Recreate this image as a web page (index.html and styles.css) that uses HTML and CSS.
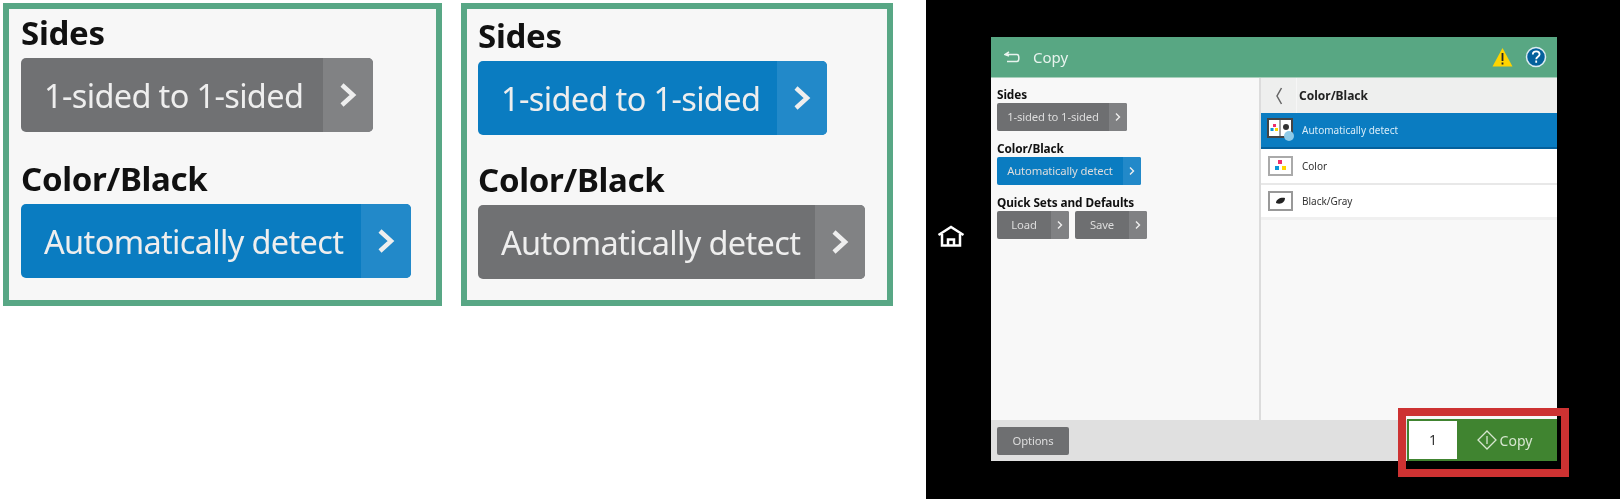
FILE: index.html
```html
<!DOCTYPE html>
<html>
<head>
    <title>Copy</title>
    <link rel="stylesheet" href="styles.css">
</head>
<body>
<div class="page">
    <div class="crop crop-first">
        <h3 class="crop-label">Sides</h3>
        <div class="big-btn big-btn-sides">
            <span class="big-text">1-sided to 1-sided</span>
            <span class="big-arrow"><svg width="18" height="24" viewBox="0 0 18 24"><path d="M3 2l11 10L3 22" fill="none" stroke="#eee" stroke-width="4.500"/></svg></span>
        </div>
        <h3 class="crop-label label-second">Color/Black</h3>
        <div class="big-btn big-btn-color blue">
            <span class="big-text">Automatically detect</span>
            <span class="big-arrow"><svg width="18" height="24" viewBox="0 0 18 24"><path d="M3 2l11 10L3 22" fill="none" stroke="#eee" stroke-width="4.500"/></svg></span>
        </div>
    </div>

    <div class="crop crop-second">
        <h3 class="crop-label">Sides</h3>
        <div class="big-btn big-btn-sides blue">
            <span class="big-text">1-sided to 1-sided</span>
            <span class="big-arrow"><svg width="18" height="24" viewBox="0 0 18 24"><path d="M3 2l11 10L3 22" fill="none" stroke="#eee" stroke-width="4.500"/></svg></span>
        </div>
        <h3 class="crop-label label-second">Color/Black</h3>
        <div class="big-btn big-btn-color">
            <span class="big-text">Automatically detect</span>
            <span class="big-arrow"><svg width="18" height="24" viewBox="0 0 18 24"><path d="M3 2l11 10L3 22" fill="none" stroke="#eee" stroke-width="4.500"/></svg></span>
        </div>
    </div>

    <div class="device">
        <div class="home">
            <svg width="28" height="22" viewBox="0 0 28 22"><path d="M1.500 10L14 2l12.500 8M5 9v11.500h18V9M11 20.500v-6h6v6" fill="none" stroke="#fff" stroke-width="2.500"/></svg>
        </div>
        <div class="screen">
            <div class="header">
                <svg class="back-icon" width="17" height="12" viewBox="0 0 17 12"><path d="M5 1L1 3.500 5 5M2 3.500h11c2.500 0 2.500 7 0 7H3" fill="none" stroke="#e8f3ee" stroke-width="1.500"/></svg>
                <span class="title">Copy</span>
                <svg class="warn-icon" width="21" height="20" viewBox="0 0 21 20"><path d="M10.500 1L20.500 19.500H.5z" fill="#ffd400"/><path d="M10.500 6v8M10.500 15.500v2" stroke="#222" stroke-width="1.800"/></svg>
                <svg class="help-icon" width="22" height="22" viewBox="0 0 22 22"><circle cx="11" cy="11" r="9.500" fill="#04609c" stroke="#dcecf2" stroke-width="1.500"/><path d="M7.800 8.500c0-4.500 6.800-4 6.800-.2 0 2.500-3.400 2.500-3.400 5M11.200 14.500v2.300" fill="none" stroke="#fff" stroke-width="1.800"/></svg>
            </div>
            <div class="body">
                <div class="left-pane">
                    <div class="small-label">Sides</div>
                    <div class="small-btn w-sides">
                        <span class="small-text">1-sided to 1-sided</span>
                        <span class="small-arrow"><svg width="6" height="8" viewBox="0 0 6 8"><path d="M1 .5L4.500 4 1 7.500" fill="none" stroke="#eee" stroke-width="1.400"/></svg></span>
                    </div>
                    <div class="small-label">Color/Black</div>
                    <div class="small-btn w-color blue">
                        <span class="small-text">Automatically detect</span>
                        <span class="small-arrow"><svg width="6" height="8" viewBox="0 0 6 8"><path d="M1 .5L4.500 4 1 7.500" fill="none" stroke="#eee" stroke-width="1.400"/></svg></span>
                    </div>
                    <div class="small-label">Quick Sets and Defaults</div>
                    <div class="small-row">
                        <div class="small-btn w-quick">
                            <span class="small-text">Load</span>
                            <span class="small-arrow"><svg width="6" height="8" viewBox="0 0 6 8"><path d="M1 .5L4.500 4 1 7.500" fill="none" stroke="#eee" stroke-width="1.400"/></svg></span>
                        </div>
                        <div class="small-btn w-quick">
                            <span class="small-text">Save</span>
                            <span class="small-arrow"><svg width="6" height="8" viewBox="0 0 6 8"><path d="M1 .5L4.500 4 1 7.500" fill="none" stroke="#eee" stroke-width="1.400"/></svg></span>
                        </div>
                    </div>
                </div>
                <div class="right-pane">
                    <div class="list-head">
                        <span class="list-back"><svg width="8" height="18" viewBox="0 0 8 18"><path d="M6.500 1L2 9l4.500 8" fill="none" stroke="#666" stroke-width="1.500"/></svg></span>
                        <span class="list-title">Color/Black</span>
                    </div>
                    <div class="list-row selected">
                        <svg class="row-icon" width="28" height="24" viewBox="0 0 28 24">
                            <rect x="1" y="1" width="24" height="18" fill="#fff" stroke="#444" stroke-width="2"/>
                            <path d="M13 1v18" stroke="#444"/>
                            <rect x="6" y="6" width="3" height="3" fill="#ee2d6b"/>
                            <rect x="3.500" y="10" width="3" height="3" fill="#0a96d8"/>
                            <rect x="8" y="10" width="3" height="3" fill="#ffd400"/>
                            <circle cx="19" cy="9" r="3" fill="#333"/>
                            <circle cx="22" cy="18" r="5" fill="#8fcbe8"/>
                        </svg>
                        <span>Automatically detect</span>
                    </div>
                    <div class="list-row">
                        <svg class="row-icon" width="28" height="24" viewBox="0 0 28 24">
                            <rect x="2" y="3" width="23" height="18" fill="#fff" stroke="#aaa" stroke-width="2"/>
                            <rect x="11" y="6" width="4" height="4" fill="#ee2d6b"/>
                            <rect x="8" y="12" width="4" height="4" fill="#0a96d8"/>
                            <rect x="15" y="12" width="4" height="4" fill="#ffd400"/>
                        </svg>
                        <span>Color</span>
                    </div>
                    <div class="list-row last">
                        <svg class="row-icon" width="28" height="24" viewBox="0 0 28 24">
                            <rect x="2" y="3" width="23" height="18" fill="#fff" stroke="#999" stroke-width="2"/>
                            <path d="M9 14c0-4 5-6 9-5 0 4-4 7-9 5z" fill="#222"/>
                        </svg>
                        <span>Black/Gray</span>
                    </div>
                </div>
            </div>
            <div class="footer">
                <div class="small-btn options"><span class="small-text">Options</span></div>
                <div class="start">
                    <span class="count">1</span>
                    <span class="start-btn">
                        <svg width="20" height="20" viewBox="0 0 20 20"><path d="M10 1l9 9-9 9-9-9zM10 6v8" fill="none" stroke="#d6e6cf" stroke-width="1.300"/></svg>
                        Copy
                    </span>
                </div>
            </div>
        </div>
        <div class="callout"></div>
    </div>
</div>
</body>
</html>
```

FILE: styles.css
```css
body {
    margin: 0;
    background: #fff;
    font-family: "Noto Sans", sans-serif;
}

.page {
    display: flex;
    align-items: flex-start;
    width: 1620px;
    height: 499px;
    overflow: hidden;
}

/* zoomed crops on the left */
.crop {
    box-sizing: border-box;
    height: 303px;
    margin-top: 3px;
    border: 6px solid #58a785;
    background: #f7f7f7;
    filter: blur(0.6px);
}
.crop-first {
    width: 439px;
    margin-left: 3px;
    padding: 5px 0 0 12px;
}
.crop-second {
    width: 432px;
    margin-left: 19px;
    padding: 8px 0 0 11px;
}
.crop-label {
    margin: 0;
    font-size: 33px;
    line-height: 38px;
    font-weight: 700;
    letter-spacing: -0.3px;
    color: #111;
}
.label-second {
    margin-top: 28px;
}
.crop-second .label-second {
    margin-top: 26px;
}
.big-btn {
    display: flex;
    box-sizing: border-box;
    height: 74px;
    margin-top: 6px;
    border-radius: 5px;
    background: #707173;
    color: #eee;
    overflow: hidden;
}
.big-btn-sides {
    width: 352px;
}
.big-btn-color {
    width: 390px;
}
.crop-second .big-btn-sides {
    width: 349px;
}
.crop-second .big-btn-color {
    width: 387px;
}
.big-text {
    flex: 1;
    padding-left: 23px;
    font-size: 32.500px;
    letter-spacing: -0.650px;
    line-height: 75px;
    white-space: nowrap;
}
.big-arrow {
    display: flex;
    align-items: center;
    justify-content: center;
    width: 50px;
    background: #818284;
}
.big-btn.blue {
    background: #0a7cc1;
}
.blue .big-arrow {
    background: #2289c9;
}

/* printer screen */
.device {
    position: relative;
    display: flex;
    box-sizing: border-box;
    width: 694px;
    height: 499px;
    margin-left: 33px;
    padding: 37px 0 0 0;
    background: #000;
}
.home {
    display: flex;
    align-items: center;
    justify-content: center;
    box-sizing: border-box;
    width: 65px;
    height: 422px;
    padding: 0 15px 24px 0;
    filter: blur(0.5px);
}
.screen {
    display: flex;
    flex-direction: column;
    width: 566px;
    height: 424px;
    background: #f8f8f8;
    filter: blur(0.6px);
}
.header {
    display: flex;
    align-items: center;
    flex: none;
    height: 40px;
    padding: 0 10px 0 13px;
    border-bottom: 1px solid #a9d0bc;
    background: #58a783;
}
.title {
    flex: 1;
    margin-left: 12px;
    font-size: 15px;
    color: #e8f3ee;
}
.help-icon {
    margin-left: 12px;
}
.body {
    display: flex;
    flex: 1;
    min-height: 0;
}
.left-pane {
    box-sizing: border-box;
    width: 270px;
    padding: 9px 0 0 6px;
    border-right: 2px solid #dcdcdc;
}
.small-label {
    margin-top: 10px;
    font-size: 11.800px;
    font-weight: 700;
    letter-spacing: -0.100px;
    line-height: 14px;
    color: #111;
    white-space: nowrap;
}
.small-label:first-child {
    margin-top: 0;
}
.small-btn {
    display: flex;
    box-sizing: border-box;
    height: 28px;
    margin-top: 2px;
    border-radius: 2px;
    background: #6e6f71;
    color: #ddd;
    overflow: hidden;
}
.w-sides {
    width: 130px;
}
.w-color {
    width: 144px;
}
.w-quick {
    width: 72px;
}
.small-btn.blue {
    background: #0a7cc1;
}
.small-text {
    flex: 1;
    font-size: 11.300px;
    letter-spacing: -0.150px;
    line-height: 28px;
    text-align: center;
    white-space: nowrap;
}
.small-arrow {
    display: flex;
    align-items: center;
    justify-content: center;
    flex: none;
    width: 18px;
    background: #808183;
}
.blue .small-arrow {
    background: #2289c9;
}
.small-row {
    display: flex;
    gap: 6px;
}
.right-pane {
    flex: 1;
}
.list-head {
    display: flex;
    align-items: center;
    height: 35px;
    background: #eeefee;
}
.list-back {
    display: flex;
    align-items: center;
    justify-content: center;
    box-sizing: border-box;
    width: 36px;
    height: 35px;
    border-right: 1px solid #f6f6f6;
}
.list-title {
    margin-left: 2px;
    font-size: 12px;
    font-weight: 700;
    color: #222;
}
.list-row {
    display: flex;
    align-items: center;
    box-sizing: border-box;
    height: 36px;
    padding-left: 6px;
    border-bottom: 2px solid #e8e8e8;
    background: #fff;
    font-size: 10px;
    color: #333;
}
.list-row span {
    margin-left: 7px;
}
.list-row.selected {
    border-bottom-color: #04609c;
    background: #0a7cc1;
    color: #d8ecf8;
}
.list-row.last {
    height: 35px;
    border-bottom: 3px solid #f0f0f0;
}
.footer {
    display: flex;
    align-items: center;
    justify-content: space-between;
    flex: none;
    height: 41px;
    padding-left: 6px;
    background: #e0e0e0;
}
.options {
    width: 72px;
    margin-top: 0;
}
.start {
    display: flex;
    align-self: flex-end;
    box-sizing: border-box;
    width: 150px;
    height: 42px;
    padding: 2px 0 2px 2px;
    background: #408430;
}
.count {
    width: 48px;
    background: #fff;
    font-size: 14px;
    line-height: 38px;
    text-align: center;
    color: #333;
}
.start-btn {
    display: flex;
    align-items: center;
    justify-content: center;
    gap: 3px;
    flex: 1;
    padding-right: 5px;
    font-size: 14px;
    color: #d6e6cf;
}

/* red box drawn over the screenshot */
.callout {
    position: absolute;
    left: 472px;
    top: 408px;
    box-sizing: border-box;
    width: 171px;
    height: 69px;
    border: 8px solid #cd3232;
}
```
